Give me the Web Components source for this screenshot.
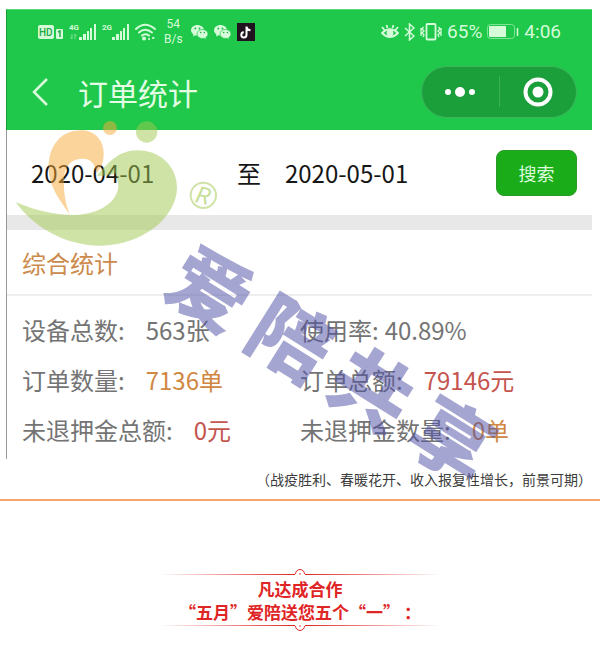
<!DOCTYPE html>
<html lang="zh-CN">
<head>
<meta charset="utf-8">
<meta name="viewport" content="width=device-width, initial-scale=1">
<title>订单统计</title>
<style>
  body { margin: 0; background: #fff; color: #333; font-family: "Noto Sans CJK SC", "Noto Sans", sans-serif; }
</style>
</head>
<body>
<article-page></article-page>
<script>
const define = (name, css, html) => customElements.define(name, class extends HTMLElement {
  constructor() {
    super();
    const t = document.createElement('template');
    t.innerHTML = `<style>*{box-sizing:border-box}${css}</style>${html}`;
    this.attachShadow({ mode: 'open' }).append(t.content.cloneNode(true));
  }
});

const bars = '<g fill="#d5fbd9"><path d="M10 14h3v3h-3zM14 11h3v6h-3zM18 8h2v9h-2zM21 5h2v12h-2zM25 1h2v16h-2z"/></g>';
const sig = g => `<svg width="27" height="18" viewBox="0 0 27 18">${bars}<text x="0" y="7" font-size="8" font-weight="700" fill="#d5fbd9" font-family="Roboto">${g}</text></svg>`;
const ICONS = {
  hd: '<svg width="25" height="18" viewBox="0 0 25 18"><rect x="0" y="2" width="16" height="14" rx="2" fill="#d5fbd9"/><text x="1" y="13" font-size="10" font-weight="500" fill="#1fa844" font-family="Roboto">HD</text><rect x="18" y="6" width="7" height="10" rx="1" fill="#d5fbd9"/><path d="M20 9l2-1v6" fill="none" stroke="#1fa844" stroke-width="1.4"/></svg>',
  g4: sig('4G').replace('</svg>', '<path d="M3 11v5M1.500 14l1.500 2M6 16v-5M7.500 13l-1.500-2" stroke="#7de394" fill="none"/></svg>'),
  g2: sig('2G'),
  wifi: '<svg width="21" height="18" viewBox="0 0 21 18" fill="none" stroke="#d5fbd9" stroke-width="2" stroke-linecap="round"><path d="M1 6Q10-2.500 20 6M4 9.500Q10 4 17 9.500M7 12.500Q10 10 14 12.500"/><circle cx="9" cy="15.500" r="1" fill="#d5fbd9"/><path d="M14 16h.1M18 15h.5" stroke-width="2"/></svg>',
  wechat: '<svg width="17" height="18" viewBox="0 0 17 18"><path d="M6.500 2C2.900 2 0 4.300 0 7.200c0 1.700 1 3.100 2.400 4L2 13.500l2.400-1.300c.7.200 1.400.3 2.100.3C10 12.500 13 10 13 7.200S10 2 6.500 2z" fill="#d5fbd9"/><path d="M11.500 6.500c-3.100 0-5.500 2-5.500 4.500s2.400 4.500 5.500 4.500c.6 0 1.200-.1 1.700-.2l2.100 1.200-.5-2c1.400-.8 2.200-2.100 2.200-3.500 0-2.500-2.400-4.500-5.500-4.500z" fill="#d5fbd9" stroke="#1fc84b" stroke-width=".7"/><g fill="#1fb548"><circle cx="4.300" cy="5.500" r=".9"/><circle cx="8.500" cy="5.500" r=".9"/><circle cx="9.700" cy="9.500" r=".8"/><circle cx="13.400" cy="9.500" r=".8"/></g></svg>',
  tiktok: '<svg width="18" height="18" viewBox="0 0 18 18"><path d="M0 0h18v18H0z" fill="#21121f"/><path d="M9.500 3.500v8.300a2.600 2.600 0 1 1-2.700-2.500M9.500 4c.3 2 1.800 3 4 3.300" fill="none" stroke="#fff" stroke-width="2"/></svg>',
  eye: '<svg width="18" height="18" viewBox="0 0 18 18" fill="none" stroke="#d5fbd9" stroke-width="1.800"><path d="M1 10Q9 2.500 17 10Q9 18 1 10zM1 4l2.500 3M5.500 2l1 3M12.500 2l-1 3M17 4l-2.500 3"/><circle cx="9" cy="10" r="2.500" fill="#d5fbd9"/></svg>',
  bt: '<svg width="11" height="18" viewBox="0 0 11 18" fill="none" stroke="#d5fbd9" stroke-width="1.500"><path d="M1 5l9 8-4.500 4V1L10 5l-9 8"/></svg>',
  vib: '<svg width="22" height="18" viewBox="0 0 22 18" fill="none" stroke="#d5fbd9" stroke-width="1.800"><rect x="6.500" y="1" width="9" height="15.500" rx="1"/><path d="M3.500 4l-1.500 2 2 2-2 2 2 2-1 2M1 5v8M18.500 4l1.500 2-2 2 2 2-2 2 1 2M21 5v8" stroke-width="1.300"/></svg>',
  battery: '<svg width="32" height="18" viewBox="0 0 32 18"><rect x=".5" y="1.500" width="27" height="14" rx="3" fill="none" stroke="#7fe596"/><path d="M2 4q0-1 1-1h16v11H3q-1 0-1-1z" fill="#d5fbd9"/><path d="M30.500 5v8" stroke="#d5fbd9" stroke-width="1.500"/></svg>'
};
customElements.define('status-icon', class extends HTMLElement {
  connectedCallback() {
    if (this.shadowRoot) return;
    this.attachShadow({ mode: 'open' }).innerHTML =
      `<style>:host{display:block;flex:none}svg{display:block}</style>${ICONS[this.getAttribute('name')]}`;
  }
});

define('status-bar', `
  :host { display: flex; justify-content: space-between; align-items: center; height: 43px; padding: 0 31px 0 31px; color: #d5fbd9; font-family: Roboto, sans-serif; }
  div { display: flex; align-items: center; }
  .l { gap: 6px; } .r { gap: 5px; font-size: 19px; line-height: 20px; }
  .speed { display: block; padding: 0 2px; font-size: 12px; line-height: 15px; text-align: center; }`, `
  <div class="l"><status-icon name="hd"></status-icon><status-icon name="g4"></status-icon><status-icon name="g2"></status-icon><status-icon name="wifi"></status-icon><div class="speed">54<br>B/s</div><status-icon name="wechat"></status-icon><status-icon name="wechat"></status-icon><status-icon name="tiktok"></status-icon></div>
  <div class="r"><status-icon name="eye"></status-icon><status-icon name="bt"></status-icon><status-icon name="vib"></status-icon><span>65%</span><status-icon name="battery"></status-icon><span>4:06</span></div>`);

define('nav-bar', `
  :host { display: flex; align-items: center; height: 77px; padding: 0 15px 0 22px; color: #e2fde4; }
  button { border: 0; padding: 0; background: none; display: grid; place-items: center; cursor: pointer; }
  .back { width: 24px; height: 40px; }
  h1 { flex: 1; margin: 0 0 0 25px; font-size: 30px; line-height: 44px; font-weight: 400; }
  .capsule { display: flex; align-items: center; width: 156px; height: 52px; border: 1px solid #3db45b; border-radius: 26px; background: #1b9f3b; }
  .capsule button { flex: 1; height: 50px; }
  i { width: 1px; height: 31px; background: #3bb058; }`, `
  <button class="back" aria-label="返回"><svg width="20" height="30" viewBox="0 0 20 30" fill="none" stroke="#d9fbdc" stroke-width="2.500"><path d="M16 2L3 15l13 13"/></svg></button>
  <h1><slot></slot></h1>
  <div class="capsule">
    <button aria-label="更多"><svg width="32" height="12" viewBox="0 0 32 12" fill="#fff"><circle cx="4" cy="6" r="3"/><circle cx="16" cy="6" r="5"/><circle cx="28" cy="6" r="3"/></svg></button><i></i>
    <button aria-label="关闭"><svg width="30" height="30" viewBox="0 0 30 30"><circle cx="15" cy="15" r="12.500" fill="none" stroke="#fff" stroke-width="4"/><circle cx="15" cy="15" r="5.500" fill="#fff"/></svg></button>
  </div>`);

define('date-search', `
  :host { display: block; }
  form { display: grid; grid-template-columns: 41fr 48px 42fr 81px; align-items: center; height: 85px; padding: 0 15px 0 24px; color: #161616; font-size: 24px; line-height: 36px; }
  input { width: 100%; min-width: 0; border: 0; padding: 0; background: none; font: inherit; height: 36px; color: inherit; }
  button { height: 46px; border: 1px solid #2a9a28; border-radius: 8px; background: #1aad19; color: #dcfadc; font-family: inherit; font-size: 18px; cursor: pointer; padding: 0; }`, `
  <form onsubmit="return false">
    <input type="text" aria-label="开始日期" value="2020-04-01"><span>至</span>
    <input type="text" aria-label="结束日期" value="2020-05-01"><button>搜索</button>
  </form>`);

define('stat-item', `
  :host { display: flex; gap: 21px; color: #747474; white-space: nowrap; }
  :host([near]) { gap: 6px; }
  :host([tone=orange]) .v { color: #cf8742; }
  :host([tone=red]) .v { color: #c4544d; }`, `
  <span><slot name="label"></slot></span><span class="v"><slot></slot></span>`);

define('stat-panel', `
  :host { display: block; font-size: 24px; }
  h2 { margin: 0; padding: 0 15px; font-size: 24px; line-height: 65px; height: 66px; font-weight: 400; color: #cc8a4c; border-bottom: 2px solid #eee; }
  .grid { display: grid; grid-template-columns: 1fr 1fr; gap: 14px 0; padding: 16px 14px 11px 15px; line-height: 36px; }`, `
  <h2><slot name="title"></slot></h2><div class="grid"><slot></slot></div>`);

define('logo-mark', `
  :host { position: absolute; left: 15px; top: 120px; pointer-events: none; }
  svg { display: block; }`, `
  <svg width="205" height="130" viewBox="45 30 615 390" aria-hidden="true">
    <g fill="#f8aa37" fill-opacity=".5"><circle cx="330" cy="54" r="21"/>
    <path d="M209 314C185 275 146 235 146 172C146 105 185 61 243 61C285 61 311 92 311 130C311 155 305 172 290 190C286 165 275 146 248 146C216 146 194 166 192 205C190 250 198 285 209 314z"/></g>
    <g fill="#a0c850" fill-opacity=".5"><circle cx="440" cy="66" r="32"/>
    <path d="M290 198C325 158 355 121 413 121C480 121 531 170 531 232C531 320 430 407 300 407C190 407 95 345 47 276C105 302 170 315 225 315C300 312 355 275 355 225Q353 208 346 190Q330 198 290 198z"/></g>
    <g fill="none" stroke="#a0c850" stroke-opacity=".5"><circle cx="610" cy="256" r="38" stroke-width="6"/></g>
    <text x="610" y="281" text-anchor="middle" font-family="Roboto" font-size="70" font-weight="400" font-style="italic" fill="#a0c850" fill-opacity=".6" transform="rotate(14 610 256)">R</text>
  </svg>`);

define('brand-watermark', `
  :host { position: absolute; left: 334px; top: 360px; display: flex; gap: 15px; transform: translate(-50%, -50%) rotate(32deg); color: rgba(75, 75, 163, .5); font-size: 80px; line-height: 80px; font-weight: 900; pointer-events: none; }`, `
  <span>爱</span><span>陪</span><span>共</span><span>享</span>`);

define('ornament-title', `
  :host { display: flex; flex-direction: column; align-items: center; margin-top: 67px; color: #df2525; }
  .rule { display: grid; grid-template-columns: 1fr 10px 1fr; width: 47%; height: 6px; align-items: end; }
  .rule b { height: 1px; background: linear-gradient(to right, transparent, #df2525); }
  .rule b:last-child { background: linear-gradient(to left, transparent, #df2525); }
  .flip { transform: scaleY(-1); }
  svg { display: block; }
  p { margin: 3px 0; font-size: 17px; line-height: 23px; font-weight: 700; text-align: center; }`, `
  <div class="rule"><b></b><svg width="10" height="7" viewBox="0 0 10 7"><path d="M.5 6a4.500 4.500 0 0 1 9 0" fill="none" stroke="#df2525"/><circle cx="5" cy="6" r="1" fill="#f08080"/></svg><b></b></div>
  <p><slot></slot></p>
  <div class="rule flip"><b></b><svg width="10" height="7" viewBox="0 0 10 7"><path d="M.5 6a4.500 4.500 0 0 1 9 0" fill="none" stroke="#df2525"/><circle cx="5" cy="6" r="1" fill="#f08080"/></svg><b></b></div>`);

define('article-page', `
  :host { display: block; position: relative; padding: 9px 0 12px; }
  figure { margin: 0 8px 0 6px; }
  .phone { border-left: 1px solid #999; }
  header { background: #1fc84b; margin-left: -1px; border-top: 1px solid #57d675; border-left: 1px solid #189c3a; }
  .band { height: 15px; background: #e8e8e8; }
  figcaption { margin-top: 8px; font-size: 14px; line-height: 24px; text-align: right; color: #3c3c3c; }
  hr { margin: 8px 0 0; border: 0; height: 2px; background: #f4a46c; }`, `
  <figure>
    <div class="phone">
      <header><status-bar></status-bar><nav-bar>订单统计</nav-bar></header>
      <date-search></date-search>
      <div class="band"></div>
      <stat-panel><span slot="title">综合统计</span>
        <stat-item><span slot="label">设备总数:</span>563张</stat-item>
        <stat-item near><span slot="label">使用率:</span>40.89%</stat-item>
        <stat-item tone="orange"><span slot="label">订单数量:</span>7136单</stat-item>
        <stat-item tone="red"><span slot="label">订单总额:</span>79146元</stat-item>
        <stat-item tone="red"><span slot="label">未退押金总额:</span>0元</stat-item>
        <stat-item tone="orange"><span slot="label">未退押金数量:</span>0单</stat-item>
      </stat-panel>
    </div>
    <figcaption>（战疫胜利、春暖花开、收入报复性增长，前景可期）</figcaption>
  </figure>
  <hr>
  <ornament-title>凡达成合作<br>“五月”爱陪送您五个“一” ：</ornament-title>
  <logo-mark></logo-mark>
  <brand-watermark></brand-watermark>`);
</script>
</body>
</html>
